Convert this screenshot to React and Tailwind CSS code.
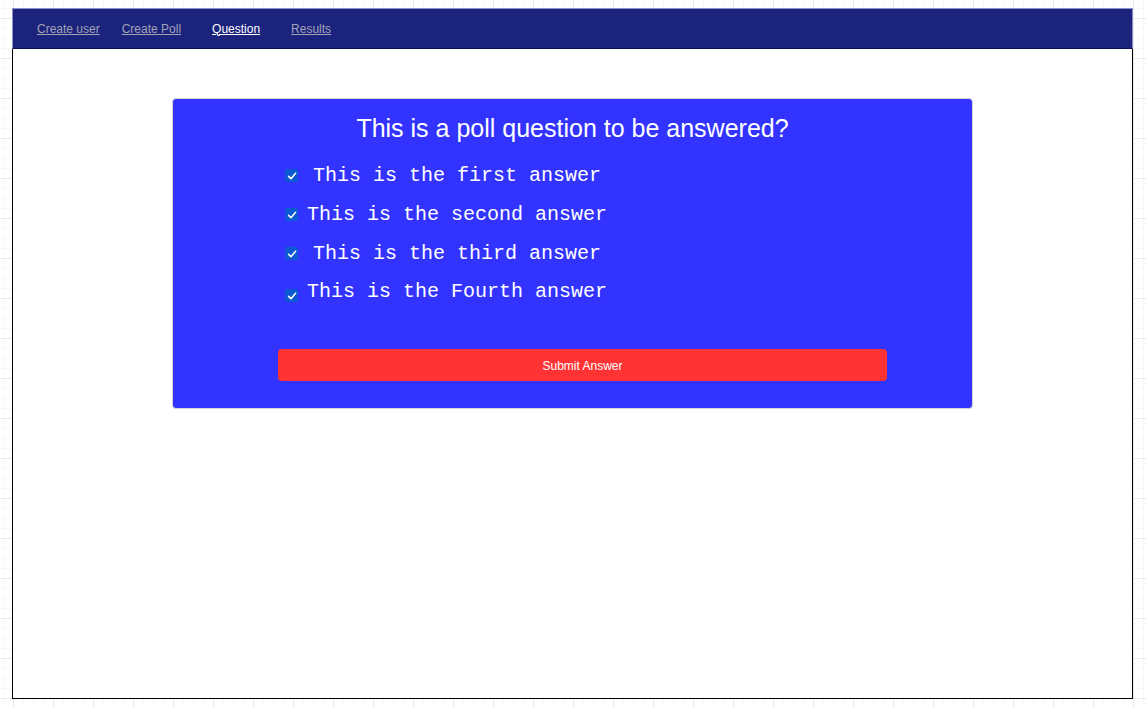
const answers = [
  { text: 'This is the first answer', indent: true },
  { text: 'This is the second answer', indent: false },
  { text: 'This is the third answer', indent: true },
  { text: 'This is the Fourth answer', indent: false, low: true },
];

const CheckBox = ({ low }) => (
  <span
    className={`flex h-[13px] w-[13px] shrink-0 items-center justify-center rounded-[2px] bg-[#0b5ad3] ${low ? 'mt-[8px]' : ''}`}
  >
    <svg viewBox="0 0 12 12" className="h-[12px] w-[12px]" fill="none">
      <path d="M2.6 6.4 L5 8.8 L9.6 3.2" stroke="white" strokeWidth="1.5" strokeLinecap="round" strokeLinejoin="round" />
    </svg>
  </span>
);

export default function App() {
  return (
    <div className="min-h-[707px] w-full bg-white bg-[linear-gradient(to_right,#e9e9e9_1px,transparent_1px),linear-gradient(to_bottom,#e9e9e9_1px,transparent_1px),linear-gradient(to_right,#f6f6f6_1px,transparent_1px),linear-gradient(to_bottom,#f6f6f6_1px,transparent_1px)] bg-[size:40px_40px,40px_40px,10px_10px,10px_10px] bg-[position:13px_18px,13px_18px,3px_8px,3px_8px] pl-[12px] pt-[8px] font-['Liberation_Sans',Arial,sans-serif]">
      <div className="w-[1121px]">
        {/* nav */}
        <nav className="flex h-[41px] items-center border border-b-[#0c1150] border-[#8a90c8] bg-[#1b237d] pl-[24px] text-[12px]">
          <a href="#" className="text-[#a3a3b8] underline">Create user</a>
          <a href="#" className="ml-[22px] text-[#a3a3b8] underline">Create Poll</a>
          <a href="#" className="ml-[31px] text-white underline">Question</a>
          <a href="#" className="ml-[31px] text-[#a3a3b8] underline">Results</a>
        </nav>

        {/* page */}
        <div className="h-[650px] border-x border-b border-black bg-white pt-[49px]">
          <div className="ml-[159px] h-[311px] w-[801px] rounded-[4px] border border-[#d4d4d8] bg-[#3333ff] pt-[15px]">
            <h1 className="text-center text-[25px] leading-[28px] text-white">
              This is a poll question to be answered?
            </h1>

            <ul className="ml-[112px] mt-[14px]">
              {answers.map((a, i) => (
                <li key={a.text} className={`flex items-center ${i === 3 ? 'h-[37px]' : 'h-[39px]'}`}>
                  <CheckBox low={a.low} />
                  <span
                    className={`font-['Liberation_Mono','Courier_New',monospace] text-[20px] leading-[24px] text-white ${a.indent ? 'ml-[15px]' : 'ml-[9px]'}`}
                  >
                    {a.text}
                  </span>
                </li>
              ))}
            </ul>

            <button className="ml-[105px] mt-[39px] h-[32px] w-[609px] rounded-[4px] bg-[#ff3333] pt-[1px] text-[12px] text-white">
              Submit Answer
            </button>
          </div>
        </div>
      </div>
    </div>
  );
}
